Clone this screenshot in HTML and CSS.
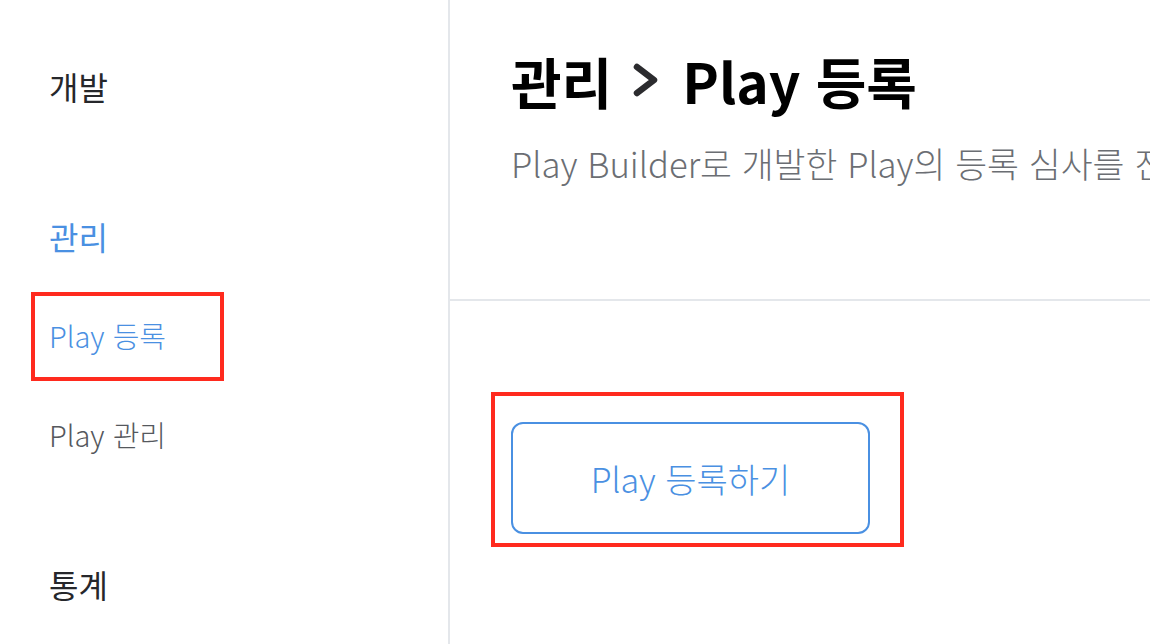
FILE: index.html
```html
<!DOCTYPE html>
<html lang="ko">
<head>
<meta charset="utf-8">
<title>Play 등록</title>
<link rel="stylesheet" href="styles.css">
</head>
<body>
<div class="page">
  <aside class="sidebar">
    <div class="section">
      <div class="group-title">개발</div>
    </div>
    <div class="section">
      <div class="group-title active">관리</div>
      <div class="item active">Play 등록</div>
      <div class="item">Play 관리</div>
    </div>
    <div class="section">
      <div class="group-title">통계</div>
    </div>
  </aside>
  <main class="main">
    <header class="header">
      <h1 class="title">
        <span>관리</span>
        <svg class="chev" width="28" height="36" viewBox="0 0 28 36" aria-hidden="true"><polyline points="5,5 22,18 5,31" fill="none" stroke="#2b2b2e" stroke-width="6.5" stroke-linecap="round" stroke-linejoin="round"/></svg>
        <span>Play 등록</span>
      </h1>
      <p class="subtitle">Play Builder로 개발한 Play의 등록 심사를 진행합니다.</p>
    </header>
    <section class="content">
      <button class="register-btn">Play 등록하기</button>
    </section>
  </main>
  <div class="mark mark-side"></div>
  <div class="mark mark-btn"></div>
</div>
</body>
</html>
```
FILE: styles.css
```css
html, body {
  margin: 0;
  padding: 0;
  background: #fff;
}
body {
  font-family: "Noto Sans CJK KR", "Noto Sans", sans-serif;
  color: #222;
  overflow: hidden;
}
.page {
  position: relative;
  display: flex;
  width: 1150px;
  height: 644px;
  overflow: hidden;
}
.sidebar {
  box-sizing: border-box;
  width: 450px;
  flex: 0 0 450px;
  border-right: 2px solid #e4e7eb;
  padding: 66px 0 0 49px;
  display: flex;
  flex-direction: column;
  gap: 110px;
}
.section {
  display: flex;
  flex-direction: column;
  gap: 59px;
}
.group-title {
  font-size: 32px;
  line-height: 40px;
  font-weight: 400;
  color: #26272b;
}
.item {
  font-size: 29px;
  line-height: 40px;
  font-weight: 300;
  color: #55585d;
}
.active {
  color: #4a90e2;
}
.main {
  flex: 1;
  min-width: 0;
}
.header {
  box-sizing: content-box;
  height: 250px;
  border-bottom: 2px solid #e4e7eb;
  padding: 49px 0 0 61px;
  white-space: nowrap;
}
.title {
  margin: 0;
  display: flex;
  align-items: center;
  font-size: 55px;
  line-height: 62px;
  font-weight: 700;
  color: #000;
}
.chev {
  margin: 0 22px 0 20px;
}
.subtitle {
  margin: 30px 0 0 0;
  font-size: 34.7px;
  line-height: 44px;
  font-weight: 300;
  color: #6b6e73;
}
.content {
  padding: 121px 0 0 61px;
}
.register-btn {
  display: flex;
  align-items: center;
  justify-content: center;
  width: 359px;
  height: 112px;
  box-sizing: border-box;
  border: 2px solid #4a90e2;
  border-radius: 12px;
  background: #fff;
  font-family: inherit;
  font-size: 34px;
  font-weight: 300;
  color: #4a90e2;
  padding: 0;
}
.mark {
  position: absolute;
  border: 4px solid #ff2a1e;
  box-sizing: border-box;
  pointer-events: none;
}
.mark-side {
  left: 31px;
  top: 292px;
  width: 193px;
  height: 89px;
}
.mark-btn {
  left: 491px;
  top: 392px;
  width: 413px;
  height: 155px;
}
```
